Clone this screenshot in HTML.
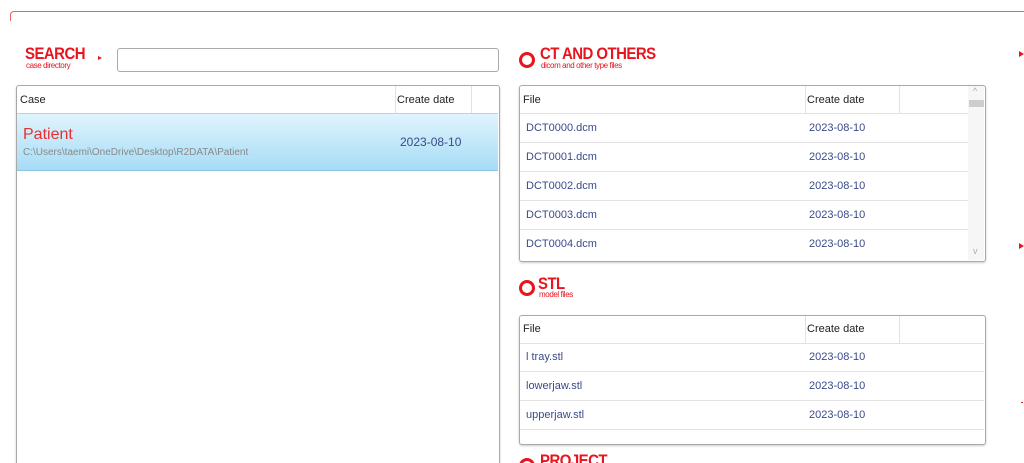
<!DOCTYPE html><html><head><style>
html,body{margin:0;width:1024px;height:463px;overflow:hidden}
body{background:#fff;font-family:"Liberation Sans",sans-serif;position:relative}
.a{position:absolute}
.h{color:#e8141e;font-weight:bold;font-size:17px;letter-spacing:-0.6px;transform:scaleX(.88);transform-origin:left;white-space:nowrap}
.s{color:#e8141e;font-size:8px;letter-spacing:-0.4px;white-space:nowrap}
.ring{width:10px;height:10px;border:3.5px solid #e8141e;border-radius:50%}
.tbl{border:1px solid #a9a9a9;border-radius:3px;box-shadow:0 1px 2px #ccc}
.t{font-size:11px;color:#222}
.c{font-size:11px;color:#3a4a8a}
.ln{height:1px;background:#e2e2e2}
.vl{width:1px;background:#e2e2e2}
</style></head><body>
<div class="a" style="left:10px;top:11px;width:1020px;height:30px;border-top:1px solid #f06060;border-left:1px solid #f06060;border-top-left-radius:4px"></div>
<div class="a" style="left:10px;top:21px;width:2px;height:30px;background:#fff"></div>
<div class="a h" style="left:25px;top:44px">SEARCH</div>
<div class="a s" style="left:26px;top:61px">case directory</div>
<div class="a" style="left:98px;top:56px;border-left:4px solid #e8141e;border-top:2px solid transparent;border-bottom:2px solid transparent"></div>
<div class="a" style="left:117px;top:48px;width:380px;height:22px;border:1px solid #aaa;border-radius:3px"></div>

<div class="a tbl" style="left:16px;top:85px;width:482px;height:400px"></div>
<div class="a t" style="left:20px;top:94px">Case</div>
<div class="a t" style="left:397px;top:94px">Create date</div>
<div class="a vl" style="left:395px;top:86px;height:27px"></div>
<div class="a vl" style="left:471px;top:86px;height:27px"></div>
<div class="a" style="left:17px;top:113px;width:481px;height:56px;border-top:1px solid #a8d8f0;border-bottom:1px solid #8cc8e8;background:linear-gradient(#e0f4fd,#a6dcf6)"></div>
<div class="a" style="left:23px;top:126px;font-size:16px;color:#e83030">Patient</div>
<div class="a" style="left:23px;top:147px;font-size:10px;color:#888">C:\Users\taemi\OneDrive\Desktop\R2DATA\Patient</div>
<div class="a c" style="left:400px;top:135px;font-size:12px">2023-08-10</div>

<div class="a ring" style="left:519px;top:52px"></div>
<div class="a h" style="left:540px;top:44px">CT AND OTHERS</div>
<div class="a s" style="left:541px;top:61px">dicom and other type files</div>
<div class="a tbl" style="left:519px;top:85px;width:465px;height:175px"></div>
<div class="a t" style="left:523px;top:94px">File</div>
<div class="a t" style="left:807px;top:94px">Create date</div>
<div class="a vl" style="left:805px;top:86px;height:27px"></div>
<div class="a vl" style="left:899px;top:86px;height:27px"></div>
<div class="a" style="left:968px;top:86px;width:16px;height:174px;background:#f6f6f6"></div>
<div class="a" style="left:969px;top:100px;width:15px;height:7px;background:#cdcdcd"></div>
<div class="a" style="left:973px;top:86px;font-size:9px;color:#aaa">^</div>
<div class="a" style="left:973px;top:246px;font-size:9px;color:#aaa">v</div>
<div class="a ln" style="left:520px;top:113px;width:448px"></div>
<div class="a ln" style="left:520px;top:142px;width:448px"></div>
<div class="a ln" style="left:520px;top:171px;width:448px"></div>
<div class="a ln" style="left:520px;top:200px;width:448px"></div>
<div class="a ln" style="left:520px;top:229px;width:448px"></div>
<div class="a c" style="left:526px;top:122px">DCT0000.dcm</div><div class="a c" style="left:809px;top:122px">2023-08-10</div>
<div class="a c" style="left:526px;top:151px">DCT0001.dcm</div><div class="a c" style="left:809px;top:151px">2023-08-10</div>
<div class="a c" style="left:526px;top:180px">DCT0002.dcm</div><div class="a c" style="left:809px;top:180px">2023-08-10</div>
<div class="a c" style="left:526px;top:209px">DCT0003.dcm</div><div class="a c" style="left:809px;top:209px">2023-08-10</div>
<div class="a c" style="left:526px;top:238px">DCT0004.dcm</div><div class="a c" style="left:809px;top:238px">2023-08-10</div>

<div class="a ring" style="left:519px;top:280px"></div>
<div class="a h" style="left:538px;top:274px">STL</div>
<div class="a s" style="left:539px;top:290px">model files</div>
<div class="a tbl" style="left:519px;top:315px;width:465px;height:128px"></div>
<div class="a t" style="left:523px;top:323px">File</div>
<div class="a t" style="left:807px;top:323px">Create date</div>
<div class="a vl" style="left:805px;top:316px;height:27px"></div>
<div class="a vl" style="left:899px;top:316px;height:27px"></div>
<div class="a ln" style="left:520px;top:343px;width:464px"></div>
<div class="a ln" style="left:520px;top:371px;width:464px"></div>
<div class="a ln" style="left:520px;top:400px;width:464px"></div>
<div class="a ln" style="left:520px;top:429px;width:464px"></div>
<div class="a c" style="left:526px;top:351px">l tray.stl</div><div class="a c" style="left:809px;top:351px">2023-08-10</div>
<div class="a c" style="left:526px;top:380px">lowerjaw.stl</div><div class="a c" style="left:809px;top:380px">2023-08-10</div>
<div class="a c" style="left:526px;top:409px">upperjaw.stl</div><div class="a c" style="left:809px;top:409px">2023-08-10</div>

<div class="a ring" style="left:519px;top:458px"></div>
<div class="a h" style="left:540px;top:451px">PROJECT</div>
<div class="a" style="left:1019px;top:51px;border-left:5px solid #e8141e;border-top:3px solid transparent;border-bottom:3px solid transparent"></div>
<div class="a" style="left:1019px;top:243px;border-left:5px solid #e8141e;border-top:3px solid transparent;border-bottom:3px solid transparent"></div>
<div class="a" style="left:1021px;top:402px;width:2px;height:1px;background:#e8141e"></div>
</body></html>
